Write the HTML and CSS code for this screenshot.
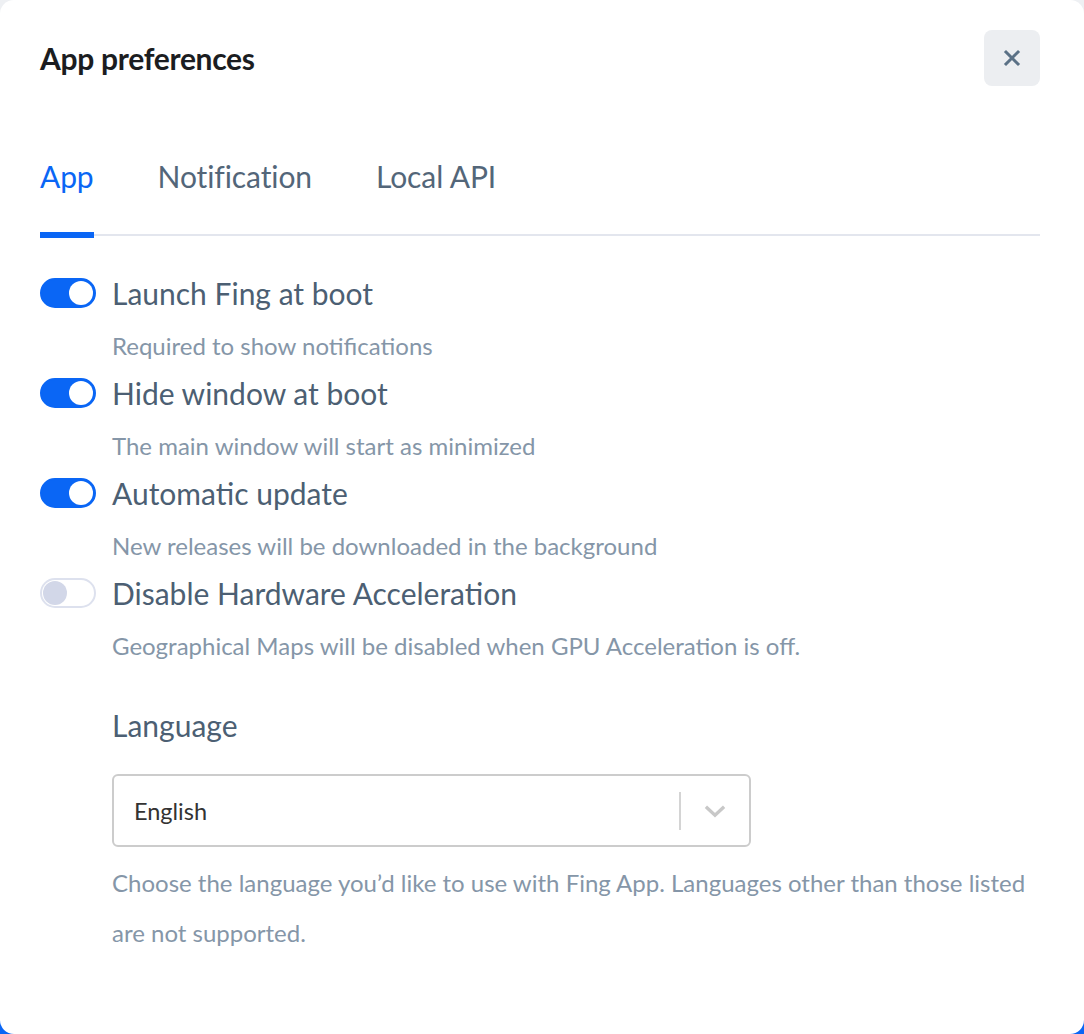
FILE: index.html
```html
<!DOCTYPE html>
<html lang="en">
	<head>
		<meta charset="utf-8">
		<link rel="stylesheet" href="styles.css">
	</head>
	<body>
		<div class="modal">

			<header class="head">
				<h1 class="title">App preferences</h1>
				<button class="close" type="button" aria-label="Close">
					<svg width="18" height="18" viewBox="0 0 18 18"><path d="M3 3 L15 15 M15 3 L3 15" stroke="#5b7186" stroke-width="3" stroke-linecap="square" fill="none"/></svg>
				</button>
			</header>

			<nav class="tabs">
				<span class="tab on">App</span>
				<span class="tab">Notification</span>
				<span class="tab">Local API</span>
			</nav>

			<section class="opts">
				<div class="opt">
					<span class="sw on"></span>
					<div class="lbl">Launch Fing at boot</div>
					<div class="desc">Required to show notifications</div>
				</div>
				<div class="opt">
					<span class="sw on"></span>
					<div class="lbl">Hide window at boot</div>
					<div class="desc">The main window will start as minimized</div>
				</div>
				<div class="opt">
					<span class="sw on"></span>
					<div class="lbl">Automatic update</div>
					<div class="desc">New releases will be downloaded in the background</div>
				</div>
				<div class="opt">
					<span class="sw"></span>
					<div class="lbl">Disable Hardware Acceleration</div>
					<div class="desc">Geographical Maps will be disabled when GPU Acceleration is off.</div>
				</div>
			</section>

			<section class="lang">
				<div class="lbl">Language</div>
				<div class="select">
					<span class="val">English</span>
					<span class="sep"></span>
					<svg class="chev" width="28" height="28" viewBox="0 0 20 20"><path d="M3.5 7 L10 13 L16.5 7" stroke="#c8c8c8" stroke-width="2.4" fill="none"/></svg>
				</div>
				<p class="help">Choose the language you’d like to use with Fing App. Languages other than those listed are not supported.</p>
			</section>

		</div>
	</body>
</html>
```

FILE: styles.css
```css
html, body { margin:0; height:100%; }
body { background:linear-gradient(to bottom, #eef0f3 50%, #0a66f5 50%); font-family:Lato, "Open Sans", sans-serif; }

.modal { box-sizing:border-box; height:100%; background:#ffffff; border-radius:14px; padding:30px 44px 0 40px; }

.head { display:flex; align-items:center; justify-content:space-between; height:56px; }
.title { margin:0; font-size:30px; font-weight:700; color:#1b1d21; letter-spacing:-0.3px; }
.close { width:56px; height:56px; border:0; border-radius:8px; background:#eceef1; display:flex; align-items:center; justify-content:center; padding:0; }

.tabs { display:flex; gap:64px; margin-top:72px; border-bottom:2px solid #e3e6ee; }
.tab { position:relative; font-size:30px; line-height:36px; padding-bottom:40px; color:#536679; letter-spacing:-0.1px; }
.tab.on { color:#0a66f5; }
.tab.on::after { content:""; position:absolute; left:0; right:0; bottom:-4px; height:6px; background:#0a66f5; }

.opts { margin-top:39px; }
.opt { display:grid; grid-template-columns:56px 1fr; column-gap:16px; margin-bottom:11px; }
.sw { grid-row:1; align-self:center; position:relative; box-sizing:border-box; width:56px; height:30px; border-radius:15px; background:#ffffff; border:2px solid #dde1ee; }
.sw::after { content:""; position:absolute; left:1px; top:1px; width:24px; height:24px; border-radius:50%; background:#d2d7e8; }
.sw.on { background:#0a66f5; border-color:#0a66f5; }
.sw.on::after { left:auto; right:1px; background:#ffffff; }
.lbl { font-size:30px; line-height:36px; color:#4c5f73; }
.desc { grid-column:2; margin-top:17px; font-size:24px; line-height:36px; color:#8596a8; }

.lang { margin:43px 0 0 72px; }
.select { display:flex; align-items:center; box-sizing:border-box; width:639px; height:73px; margin-top:31px; border:2px solid #cccccc; border-radius:6px; padding:0 20px 0 20px; }
.val { flex:1; font-size:23.5px; color:#333333; }
.sep { width:2px; height:38px; background:#d4d4d4; margin-right:20px; }
.help { margin:11px 0 0; font-size:24px; line-height:50px; color:#8596a8; }
```
